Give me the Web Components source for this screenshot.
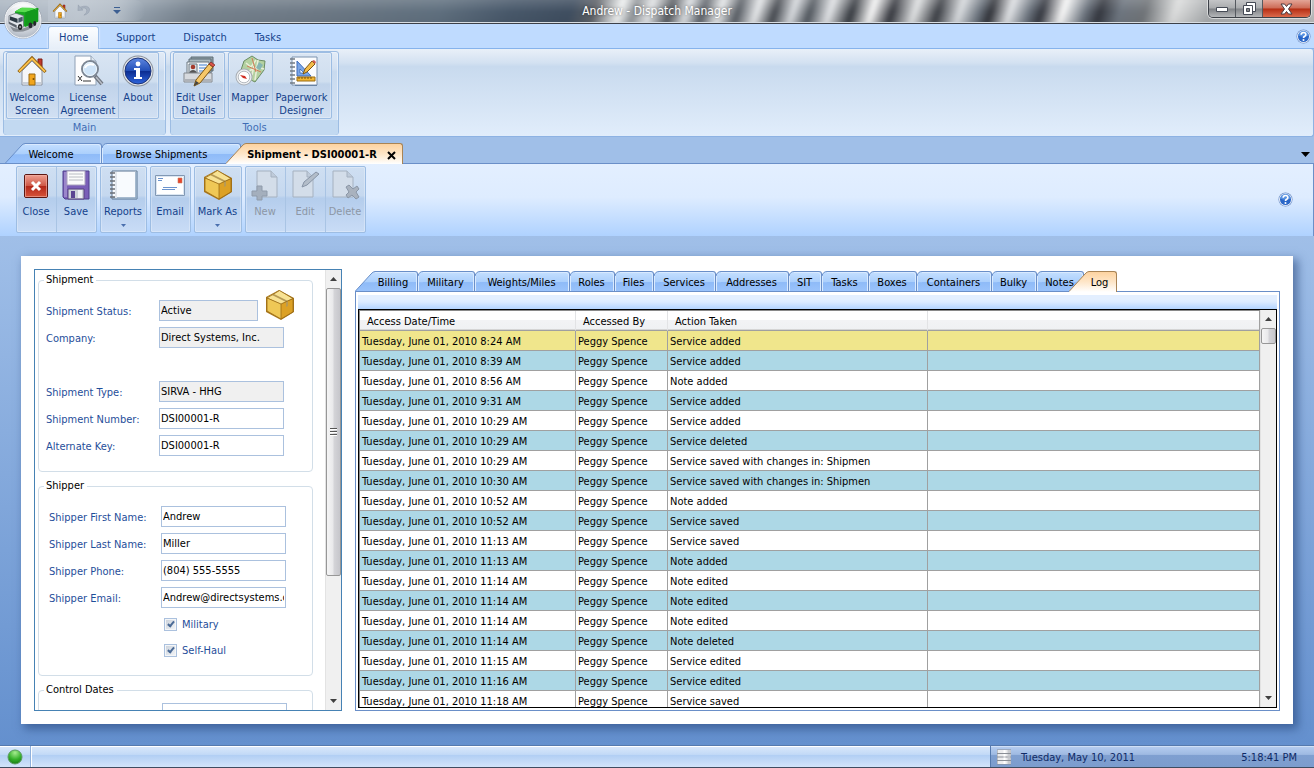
<!DOCTYPE html>
<html lang="en">
<head>
<meta charset="utf-8">
<title>Andrew - Dispatch Manager</title>
<style>
html, body { margin: 0; height: 100%; }
body { font: 11px/14px "DejaVu Sans Condensed", "DejaVu Sans", sans-serif; color: #000; overflow: hidden; background: #a0bfe8; }
</style>
</head>
<body>
<dispatch-app></dispatch-app>
<script>
const RESET = `<style>
:host { display: block; box-sizing: border-box; }
*, *::before, *::after { box-sizing: border-box; }
button { font: inherit; color: inherit; background: none; border: 0; padding: 0; margin: 0; cursor: default; }
svg { display: block; flex: none; }
</style>`;

function define(name, markup, setup) {
  const template = document.createElement('template');
  template.innerHTML = RESET + (typeof markup === 'string' ? markup : '');
  customElements.define(name, class extends HTMLElement {
    connectedCallback() {
      if (this.shadowRoot) return;
      const root = this.attachShadow({ mode: 'open' });
      if (typeof markup === 'function') root.innerHTML = RESET + markup(this);
      else root.append(template.content.cloneNode(true));
      if (setup) setup(this, root);
    }
  });
}

/* ---------- icons ---------- */
const PAGE = `<path d="M8 2h14l6 6v20H8z" fill="#d3dde9" stroke="#a5b1c0"/><path d="M22 2v6h6" fill="#bfcbda" stroke="#a5b1c0"/>`;
const PAGE_LEFT = `<path d="M4 2h14l6 6v20H4z" fill="#d3dde9" stroke="#a5b1c0"/><path d="M18 2v6h6" fill="#bfcbda" stroke="#a5b1c0"/>`;
const ICONS = {
  house: `<path d="M22 4h4v9h-4z" fill="#c0392b" stroke="#7d2016"/><path d="M6 16 16 6l10 10v14H6z" fill="#f6f7f9" stroke="#8d94a0"/><path d="M7 27h18v3H7z" fill="#c9cfd8"/><path d="M13 19h6v11h-6z" fill="#f2a51c" stroke="#9b6a10"/><circle cx="17.500" cy="24" r="1" fill="#7a4c00"/><path d="M2.500 17 16 3l13.500 14" fill="none" stroke="#8a5b0d" stroke-width="3.200"/><path d="M3 16.500 16 3.500l13 13" fill="none" stroke="#f9c04a" stroke-width="1.800"/>`,
  license: `<path d="M3 1h16l5 5v24H3z" fill="#fdfdfe" stroke="#8fa0b5"/><path d="M19 1v5h5" fill="#dfe6ee" stroke="#8fa0b5"/><path d="m6 21 4 5m0-5-4 5M11 26h8" stroke="#333" fill="none"/><path d="m23 21 7 8" stroke="#6f7681" stroke-width="4"/><path d="m24 22 6 7" stroke="#b8bdc6" stroke-width="1.500"/><circle cx="18" cy="14" r="8" fill="#cfe4f8" stroke="#7d8794" stroke-width="2"/><circle cx="18" cy="14" r="6.500" fill="none" stroke="#eef6fd"/><path d="M13 13a6 5 0 0 1 9-3" stroke="#fff" stroke-width="2" fill="none"/>`,
  about: `<defs><linearGradient id="ab" x2="0" y2="1"><stop offset="0" stop-color="#5d86e0"/><stop offset=".48" stop-color="#2450b8"/><stop offset=".52" stop-color="#0c2d92"/><stop offset="1" stop-color="#2f65dc"/></linearGradient></defs><circle cx="16" cy="16" r="15.500" fill="#888f99"/><circle cx="16" cy="16" r="14.600" fill="#e3e6ea"/><circle cx="16" cy="16" r="13" fill="url(#ab)" stroke="#1b3277"/><circle cx="16" cy="9" r="2.400" fill="#fff"/><path d="M12 13h6v9h2v2h-8v-2h2v-7h-2z" fill="#fff"/>`,
  userEdit: `<path d="M8 2h22v14H8z" fill="#8fa0a8" stroke="#5f6c74"/><path d="M6 4h22v14H6z" fill="#a9b9c0" stroke="#5f6c74"/><path d="M4 7h22v14H4z" fill="#f4f8fb" stroke="#6a767e"/><path d="M6 9h8v9H6z" fill="#dce4ea" stroke="#6a767e"/><circle cx="10" cy="12" r="2.300" fill="#a33a2c"/><path d="M6.500 18c0-4 7-4 7 0z" fill="#555"/><path d="M16 10h8m-8 3h8m-8 3h6" stroke="#3f7fd0"/><path d="M1 18h28v9H1z" fill="#d7dade" stroke="#84898f"/><path d="M1.500 24h27v2.500h-27z" fill="#aeb2b8"/><path d="m11 31 2-6L26 9l4 3-13 16z" fill="#f6c768" stroke="#7c5513"/><path d="m26 9 2-2 4 3-2 2z" fill="#d9534a" stroke="#7d2b20" stroke-width=".7"/><path d="m11 31 2-5 3 2z" fill="#444"/>`,
  mapper: `<path d="M10 6 18 1l6 4 7 1-1 9-9 12-8-4-9 1z" fill="#b4d1a0" stroke="#6b8c63"/><path d="m12 8 5 4 5-7M15 16l8-4 7 2M18 20l2-9M24 5l-3 20" stroke="#e8efd8" stroke-width="1.600" fill="none"/><path d="m18 3 4 14m-9-6 14 6" stroke="#d17a55" fill="none"/><path d="m25 7 4 3-3 5-4-2z" fill="#86b5b2"/><circle cx="10" cy="22" r="8.500" fill="#a8aeb5"/><circle cx="10" cy="22" r="7.500" fill="#eef0f2"/><circle cx="10" cy="22" r="5.800" fill="#fff" stroke="#b5bac0"/><path d="m6 20 5 1 2 3-4-1z" fill="#cf2c20"/>`,
  designer: `<path d="M6 2h25v28H6z" fill="#fbfcfe" stroke="#7d93ae"/><path d="M9 30.500h22" stroke="#6883a5"/><path d="M4 4h5M4 8h5M4 12h5M4 16h5M4 20h5M4 24h5M4 28h5" stroke="#737b84" stroke-width="1.600"/><path d="m11 6 14 15H11z" fill="#7ba6e6" stroke="#3d6dbd"/><path d="m14 14 4 4h-4z" fill="#fbfcfe" stroke="#2c5eb0" stroke-width=".7"/><path d="M11 22h18v4H11z" fill="#f2b632" stroke="#9a6c12"/><path d="M13 22v2m3-2v2m3-2v2m3-2v2m3-2v2" stroke="#7a520a"/><path d="m17 19 2-5 7-8 3 3-8 8z" fill="#f3bc4a" stroke="#7c5513"/><path d="m26 6 2-1 2 2-1 2z" fill="#d05a50"/>`,
  close: `<defs><linearGradient id="cl" x2="0" y2="1"><stop offset="0" stop-color="#f0a294"/><stop offset=".48" stop-color="#cf5a48"/><stop offset=".52" stop-color="#b3281a"/><stop offset="1" stop-color="#d8563c"/></linearGradient></defs><rect x="4.500" y="5.500" width="23" height="23" rx="1.500" fill="url(#cl)" stroke="#5c1712"/><rect x="5.500" y="6.500" width="21" height="21" fill="none" stroke="#f2b3a6" stroke-opacity=".6"/><path d="m12 13 8 8m0-8-8 8" stroke="#fff" stroke-width="3"/>`,
  save: `<path d="M3 2h26v28H5l-2-2z" fill="#7a5fb8" stroke="#4e3f8c"/><path d="M4 3h3v25H4z" fill="#9b86cb"/><path d="M7 2h18v14H7z" fill="#fbfbfb" stroke="#a9a2bd"/><path d="M9 5h14M9 8h14M9 11h14" stroke="#b9bcc3"/><path d="M8 20h16v10H8z" fill="#ccd1d8" stroke="#56427e"/><path d="M11 22h4v7h-4z" fill="#5b4592"/><path d="M18 21h4v8h-4z" fill="#eef0f3"/>`,
  reports: `<path d="M5 2h25v28H5z" fill="#f8fbfe" stroke="#5b7591"/><path d="M29 3v26H6" stroke="#8aa5c0" fill="none" stroke-width="1.500"/><path d="M9 3v26" stroke="#e1e6ec" stroke-width="2"/><path d="M3 4h5M3 8h5M3 12h5M3 16h5M3 20h5M3 24h5M3 28h5" stroke="#696f76" stroke-width="1.600"/>`,
  email: `<path d="M1.500 6.500h29v20h-29z" fill="#fff" stroke="#8198b4"/><path d="M2.500 7.500h27v18h-27z" fill="none" stroke="#dbe6f2"/><path d="M24 9h4v5h-4z" fill="#e8452c" stroke="#c47a60" stroke-width=".6"/><path d="M4 9.500h5M4 11.500h4M9 18.500h14M8 20.500h13" stroke="#6b93cd"/>`,
  box: `<path d="m15 1 15 8v14L17 31 2 23V8z" fill="#a9761a"/><path d="m3 9 14 6v15L3 22z" fill="#efc856"/><path d="m17 15 12-5v12.500L17 30z" fill="#dca125"/><path d="m3 8.500 12.500-7 13 8L17 15z" fill="#f8e293"/><path d="m8 6 14 7v5l2-1v-5L10 5z" fill="#b79a55"/><path d="M17 15v15M3 9l14 6 12-5.500M3 9v13l14 8 12-7V9.500L15.500 1.500z" fill="none" stroke="#9a6c17" stroke-width=".8"/>`,
  newDoc: PAGE + `<path d="M8 17h5v5h5v5h-5v4H8v-4H3v-5h5z" fill="#a4afbd" stroke="#8f9bab"/>`,
  editDoc: PAGE_LEFT + `<path d="m13 18 2-5L27 3l3 2-12 11z" fill="#b3bdc9" stroke="#8794a6"/>`,
  deleteDoc: PAGE_LEFT + `<path d="m17 18 3-2 4 4 4-3 2 3-3 3 3 5-3 2-4-4-4 3-2-3 3-3z" fill="#a9b2be" stroke="#8a96a6"/>`,
  help: `<circle cx="16" cy="16" r="15" fill="#6d8fc9"/><circle cx="16" cy="16" r="13.500" fill="#fff"/><circle cx="16" cy="16" r="11.800" fill="#2b67c8"/><path d="M5 14a11 11 0 0 1 22 0q-11 5-22 0" fill="#6aa2ea" opacity=".7"/><path d="M11 12.500q0-5 5-5t5 4.500q0 2-2.500 3.500T16 19" fill="none" stroke="#fff" stroke-width="3.500"/><circle cx="16" cy="23.500" r="2.200" fill="#fff"/>`,
  undo: `<path d="m5 4-1 12 11-1-4-3q10-4 12 3 1 6-6 11 12-3 12-13Q26 3 8 9z" fill="#a9b3c0" stroke="#8d98a7"/>`,
  truck: `<defs><radialGradient id="orb" cx=".5" cy=".25" r=".8"><stop offset="0" stop-color="#fff"/><stop offset=".6" stop-color="#d9dde3"/><stop offset="1" stop-color="#a7b0bd"/></radialGradient></defs><circle cx="20" cy="20" r="19" fill="#7e8794" opacity=".6"/><circle cx="20" cy="20" r="18" fill="url(#orb)" stroke="#f4f6f8"/><g transform="translate(2.500 2) scale(.86)"><path d="M5 28q14 9 28-5l2 4q-12 10-26 7z" fill="#6b7078" opacity=".7"/><path d="m11 11 7-4 20 0v16l-15 6-12-8z" fill="#17a81f"/><path d="m11 11 8-4.500 19 .5-15 5z" fill="#58dc50"/><path d="m23 12 15-5v15l-15 6z" fill="#12991b"/><path d="m4 16 8-3 9 3v13l-8 1-9-5z" fill="#e1e5ea" stroke="#606873" stroke-width=".8"/><path d="m5 16.500 9 3v5l-9-3.500z" fill="#2c3944"/><path d="m15 19 5-2v5l-5 2z" fill="#4a5a68"/><path d="m4 23 9 4v3l-9-5z" fill="#596069"/><ellipse cx="17" cy="29" rx="2.500" ry="3.500" fill="#25282c"/><ellipse cx="29" cy="27" rx="2.200" ry="3.300" fill="#25282c"/><ellipse cx="34" cy="25" rx="1.800" ry="2.800" fill="#25282c"/><circle cx="17" cy="29" r="1" fill="#bbb"/></g><path d="M6 10Q20-4 34 10q-8-4-14-4T6 10" fill="#fff" opacity=".5"/>`,
  db: `<path d="M2 1h28v30H2z" fill="#8b8f96"/><path d="M3 2h26v6H3zM3 10h26v5H3zM3 17h26v5H3zM3 24h26v6H3z" fill="#ececee"/><path d="M15 2h4v6h-4zM15 10h4v5h-4zM15 17h4v5h-4zM15 24h4v6h-4z" fill="#fff"/><path d="M23 2h6v6h-6zM23 10h6v5h-6zM23 17h6v5h-6zM23 24h6v6h-6z" fill="#c9cbd0"/>`
};
define('ui-icon', el => {
  const size = el.getAttribute('size') || 32;
  const box = el.getAttribute('name') === 'truck' ? 40 : 32;
  return `<style>:host { flex: none; width: ${size}px; height: ${size}px; }</style>
  <svg width="${size}" height="${size}" viewBox="0 0 ${box} ${box}" aria-hidden="true">${ICONS[el.getAttribute('name')]}</svg>`;
});

/* ---------- title bar ---------- */
define('title-bar', `<style>
:host { position: relative; height: 24px; overflow: hidden; background: #6c7882; border-bottom: 1px solid #3c4048; display: flex; justify-content: center; }
.glass { position: absolute; inset: -4px -10px; transform: skewX(-18deg); filter: blur(2px); background:
  linear-gradient(#fff3, #fff0 50%, #0001),
  linear-gradient(90deg, #aab5c1 0, #b8c1cb 90px, #9aa6b2 140px, #77838f 200px, #6d7985 330px, #5f6f7e 450px, #48586a 520px, #3f4e60 580px, #5d6167 604px, #f2f4f4 630px, #8e9296 644px, #e4e6e8 660px, #55595e 680px, #dfe2e5 697px, #5c6168 713px, #e9ebec 730px, #565b62 748px, #e8eaec 767px, #43474d 785px, #dadde1 803px, #4f555c 820px, #e4e6e9 840px, #34383e 862px, #fafafa 882px, #34363d 902px, #e2e4e5 925px, #3a3d43 948px, #dadde0 970px, #68707a 990px, #303238 1001px, #e2e4e7 1020px, #69717b 1040px, #34373f 1052px, #fafafa 1073px, #6a727c 1096px, #34373f 1110px, #6e7680 1130px, #707478 1155px, #dcdddd 1185px, #a8abad 1220px, #b9bbbc 1300px); }
.rim { position: absolute; inset: auto 0 0; height: 1px; background: #d8dde2; }
.tools { position: absolute; left: 48px; top: 0; height: 21px; display: flex; align-items: center; gap: 8px; padding: 0 24px 0 4px; border-radius: 0 10px 10px 0; background: linear-gradient(90deg, #c3ccd680, #c9d0d880 70%, #c9d0d800); }
.caret { width: 8px; margin-left: 14px; }
h1 { position: relative; margin: 0; font-weight: normal; font-size: 12px; line-height: 22px; color: #fff; text-shadow: 0 0 3px #0008; }
.win { position: absolute; right: 3px; top: 0; height: 18px; display: flex; border: 1px solid #3d4148; border-top: 0; border-radius: 0 0 5px 5px; overflow: hidden; box-shadow: 0 0 0 1px #fff8; }
.win button { width: 27px; display: grid; place-items: center; background: linear-gradient(#c4c5c7, #a9abad 48%, #7f8286 52%, #b5b7b9); border-right: 1px solid #55595f; }
.win .x { width: 47px; border: 0; background: linear-gradient(#e3a597, #cd6a55 48%, #b52d13 52%, #dc6a4c); }
</style>
<div class="glass"></div><div class="rim"></div>
<div class="tools">
  <button aria-label="Home"><ui-icon name="house" size="16"></ui-icon></button>
  <button aria-label="Undo"><ui-icon name="undo" size="15"></ui-icon></button>
  <button class="caret" aria-label="Customize"><svg width="8" height="8" viewBox="0 0 8 8"><path d="M1 .5h6" stroke="#3d5f92"/><path d="M0 3h8L4 7z" fill="#3d5f92"/></svg></button>
</div>
<h1>Andrew - Dispatch Manager</h1>
<div class="win">
  <button aria-label="Minimize"><svg width="12" height="6" viewBox="0 0 12 6"><path d="M.5 1.500h11v4H.5z" fill="#fff" stroke="#454a55"/></svg></button>
  <button aria-label="Restore"><svg width="13" height="13" viewBox="0 0 13 13"><path d="M3.500.5h9v9h-9z" fill="#fff" stroke="#454a55"/><path d="M.5 3.500h9v9h-9z" fill="#fff" stroke="#454a55"/><path d="M3.500 6.500h3v3h-3z" fill="#888" stroke="#454a55"/></svg></button>
  <button class="x" aria-label="Close window"><svg width="13" height="12" viewBox="0 0 13 12"><path d="M1 1h3.500l2 2.500L8.500 1H12L8.500 6l3.500 5H8.500l-2-2.500-2 2.500H1l3.500-5z" fill="#fff" stroke="#4a3a40"/></svg></button>
</div>`);

/* ---------- ribbon ---------- */
define('ribbon-tabs', `<style>
:host { height: 25px; background: #bfdbff; border-bottom: 1px solid #86b3ec; display: flex; align-items: flex-end; padding: 0 3px 0 48px; }
nav { display: flex; flex: 1; gap: 6px; margin-bottom: -1px; }
button { height: 23px; padding: 0 10px 1px; border: 1px solid transparent; border-bottom: 0; border-radius: 3px 3px 0 0; color: #15428b; }
button.on { border-color: #9fc0ea; background: linear-gradient(#fbfdff, #e6eef8); box-shadow: 0 0 2px #fff; }
.help { height: 16px; padding: 0; margin-bottom: 4px; border: 0; }
</style>
<nav><button class="on">Home</button><button>Support</button><button>Dispatch</button><button>Tasks</button></nav>
<button class="help" aria-label="Help"><ui-icon name="help" size="15"></ui-icon></button>`);

define('ribbon-group', el => `<style>
:host { display: flex; flex-direction: column; border: 1px solid #9dbde3; border-radius: 3px; background: linear-gradient(#e3ecf7, #d3e1f2 20%, #c8daef 24%, #d9e7f7); box-shadow: inset 0 0 0 1px #f2f7fd99; }
.items { display: flex; gap: 3px; padding: 0 6px 0 2px; }
.title { height: 15px; margin-top: 1px; text-align: center; line-height: 16px; color: #3e6db5; background: #c2d9f1; border-radius: 0 0 3px 3px; }
</style><div class="items"><slot></slot></div><div class="title">${el.getAttribute('title-text')}</div>`);

define('button-box', `<style>
:host { display: flex; height: 67px; border: 1px solid #9dbde3; border-radius: 2px; background: linear-gradient(#d9e5f3, #cfdeef 44%, #c0d3ea 48%, #d1e0f3); box-shadow: inset 0 0 0 1px #ffffff44; }
::slotted(tool-button:not(:first-child)) { border-left: 1px solid #a9c4e4; }
</style><slot></slot>`);

define('tool-button', el => `<style>
:host { width: var(--w); }
button { display: flex; flex-direction: column; align-items: center; gap: 4px; width: 100%; height: 100%; padding: 2px 1px 0 0; color: #15428b; line-height: 13px; text-align: center; white-space: nowrap; }
button:disabled { color: #8d97a5; }
.menu { margin-top: 2px; }
</style><button ${el.hasAttribute('disabled') ? 'disabled' : ''}><ui-icon name="${el.getAttribute('icon')}"></ui-icon><span><slot></slot></span>
${el.hasAttribute('menu') ? '<svg class="menu" width="5" height="3" viewBox="0 0 5 3"><path d="M0 0h5L2.500 3z" fill="#4a6fae"/></svg>' : ''}</button>`);

define('ribbon-bar', `<style>
:host { height: 88px; display: flex; gap: 4px; padding: 2px 3px 1px; background: linear-gradient(#e9f0f8, #d3e1f1 16%, #c8daee 20%, #e1edfb); border-bottom: 1px solid #8db2e3; border-right: 1px solid #8db2e3; border-radius: 0 3px 3px 0; }
</style>
<ribbon-group title-text="Main">
  <button-box>
    <tool-button icon="house" style="--w:51px">Welcome<br>Screen</tool-button>
    <tool-button icon="license" style="--w:60px">License<br>Agreement</tool-button>
    <tool-button icon="about" style="--w:40px">About</tool-button>
  </button-box>
</ribbon-group>
<ribbon-group title-text="Tools">
  <button-box><tool-button icon="userEdit" style="--w:50px">Edit User<br>Details</tool-button></button-box>
  <button-box>
    <tool-button icon="mapper" style="--w:43px">Mapper</tool-button>
    <tool-button icon="designer" style="--w:59px">Paperwork<br>Designer</tool-button>
  </button-box>
</ribbon-group>`);

/* ---------- tabs ---------- */
define('tab-strip', `<style>
:host { display: flex; height: 21px; padding-left: var(--inset, 0px); box-shadow: inset 0 -1px #6a8fc8; }
</style><slot></slot>`);

define('tab-item', el => {
  const on = el.hasAttribute('active'), slant = el.hasAttribute('slant');
  const w = slant ? 20 : 5, line = on ? '#a98455' : '#6a8fc8';
  const stops = on ? '<stop stop-color="#fdd3a0"/><stop offset=".5" stop-color="#fee6c8"/><stop offset="1" stop-color="#fff"/>'
    : '<stop stop-color="#c4dfff"/><stop offset=".5" stop-color="#acd0fc"/><stop offset=".55" stop-color="#8fbbf8"/><stop offset="1" stop-color="#9ac3fb"/>';
  const edge = slant ? 'M0 20.500 16 3Q18 .5 20 .5' : 'M0 5Q1 .5 5 .5';
  return `<style>
  :host { width: var(--w); flex: none; ${on ? 'margin-left:-15px; position: relative;' : ''} }
  .tab { display: flex; width: 100%; height: 21px; }
  .body { flex: 1; display: flex; align-items: center; justify-content: center; padding: 2px var(--pad, 6px) 0 0; white-space: nowrap; border: 1px solid ${line}; border-left: 0; border-top-right-radius: 3px; ${on ? 'border-bottom: 0;' : ''}
    background: ${on ? 'linear-gradient(#fdd3a0, #fee6c8 50%, #fff)' : 'linear-gradient(#c4dfff, #acd0fc 50%, #8fbbf8 55%, #9ac3fb)'}; ${on ? '' : 'box-shadow: inset -1px 1px #d9eaff;'} }
  </style><button class="tab" role="tab" aria-selected="${on}"><svg width="${w}" height="21" viewBox="0 0 ${w} 21"><defs><linearGradient id="g" x2="0" y2="1">${stops}</linearGradient></defs>
  <path d="${edge}V21H0z" fill="url(#g)"/><path d="${edge}" fill="none" stroke="${line}"/>${slant ? '' : '<path d="M.5 20V5" stroke="#d9eaff"/>'}${on ? '' : `<path d="M0 20.500h${w}" stroke="${line}"/>`}</svg><span class="body"><slot></slot></span></button>`;
});

define('document-tabs', `<style>
:host { display: flex; padding-top: 6px; background: #a0bfe8; }
tab-strip { flex: 1; --inset: 5px; }
tab-item { --pad: 24px; }
tab-item[active] { --pad: 5px; font-weight: bold; }
.x { margin-left: 10px; }
.more { align-self: flex-end; padding: 0 4px 7px 0; box-shadow: inset 0 -1px #6a8fc8; }
</style>
<tab-strip role="tablist">
  <tab-item slant style="--w:97px">Welcome</tab-item>
  <tab-item style="--w:139px">Browse Shipments</tab-item>
  <tab-item slant active style="--w:177px">Shipment - DSI00001-R<svg class="x" width="9" height="9" viewBox="0 0 9 9"><path d="m1 1 7 7m0-7-7 7" stroke="#000" stroke-width="2"/></svg></tab-item>
</tab-strip>
<button class="more" aria-label="More tabs"><svg width="9" height="5" viewBox="0 0 9 5"><path d="M0 0h9L4.500 5z"/></svg></button>`);

/* ---------- document toolbar ---------- */
define('document-toolbar', `<style>
:host { display: flex; gap: 3px; padding: 2px 20px 3px 16px; background: linear-gradient(#e3efff, #deecff 46%, #afd2ff); border-right: 1px solid #6a8fc8; }
button-box { background: linear-gradient(#cfdff2, #c5d8ef 44%, #b4cdec 48%, #c9dcf6); }
.help { margin-left: auto; }
</style>
<button-box><tool-button icon="close" style="--w:39px">Close</tool-button><tool-button icon="save" style="--w:40px">Save</tool-button></button-box>
<button-box><tool-button icon="reports" menu style="--w:45px">Reports</tool-button></button-box>
<button-box><tool-button icon="email" style="--w:39px">Email</tool-button></button-box>
<button-box><tool-button icon="box" menu style="--w:46px">Mark As</tool-button></button-box>
<button-box><tool-button icon="newDoc" disabled style="--w:39px">New</tool-button><tool-button icon="editDoc" disabled style="--w:40px">Edit</tool-button><tool-button icon="deleteDoc" disabled style="--w:40px">Delete</tool-button></button-box>
<button class="help" aria-label="Help"><ui-icon name="help" size="15"></ui-icon></button>`);

/* ---------- scroll bar ---------- */
define('scroll-bar', `<style>
:host { flex: none; display: flex; flex-direction: column; align-items: center; width: 16px; background: #f0f0f0; border-left: 1px solid #e3e3e3; }
.end { flex: none; height: 18px; display: grid; place-items: center; }
.track { flex: 1; width: 100%; min-height: 0; }
.thumb { display: grid; place-items: center; height: var(--thumb); border: 1px solid #979797; border-radius: 2px; background: linear-gradient(90deg, #f5f5f5, #e9e9eb 45%, #d4d4d8 55%, #c6c6cb); }
</style>
<div class="end"><svg width="7" height="4" viewBox="0 0 7 4"><path d="M0 4h7L3.500 0z" fill="#404040"/></svg></div>
<div class="track"><div class="thumb"><slot></slot></div></div>
<div class="end"><svg width="7" height="4" viewBox="0 0 7 4"><path d="M0 0h7L3.500 4z" fill="#404040"/></svg></div>`);

/* ---------- shipment form ---------- */
define('field-group', el => `<style>
fieldset { margin: 0; min-width: 0; padding: var(--top, 13px) 8px 15px var(--left, 7px); border: 1px solid #d2dee8; border-radius: 4px; display: block; }
legend { padding: 0 3px 0 2px; margin-left: calc(5px - var(--left, 7px)); line-height: 14px; }
.rows { display: grid; gap: 6px; }
</style><fieldset><legend>${el.getAttribute('label')}</legend><div class="rows"><slot></slot></div></fieldset>`);

define('text-field', el => `<style>
:host { display: flex; height: 21px; align-items: center; }
label { width: var(--label, 113px); flex: none; color: #1f4e9a; padding-top: 2px; }
input { width: var(--field, 125px); height: 21px; padding: 0 1px; border: 1px solid #abc1de; border-radius: 0; background: #fff; font: inherit; color: #000; outline: 0; }
input:read-only { background: #f0f0f0; }
</style><label for="f">${el.getAttribute('label')}</label><input id="f" type="text" value="${el.getAttribute('value') || ''}" ${el.hasAttribute('readonly') ? 'readonly' : ''}><slot></slot>`);

define('check-field', el => `<style>
:host { display: flex; height: 20px; align-items: center; padding-left: 115px; }
input { appearance: none; width: 13px; height: 13px; margin: 0 5px 0 0; border: 1px solid #abc1de; background: linear-gradient(135deg, #c9d0da, #f4f6f8); box-shadow: inset 0 0 0 1px #f4f6f8; display: grid; place-items: center; }
input:checked::before { content: ""; width: 4px; height: 7px; margin-top: -2px; border: solid #4a6a96; border-width: 0 2px 2px 0; transform: rotate(40deg); }
label { color: #1f4e9a; padding-top: 2px; }
</style><input id="c" type="checkbox" checked><label for="c">${el.getAttribute('label')}</label>`);

define('shipment-form', `<style>
:host { display: flex; border: 1px solid #4682b4; background: #fff; overflow: hidden; }
.scroll { flex: 1; overflow: hidden; padding: 3px 12px 0 3px; display: flex; flex-direction: column; gap: 7px; }
field-group { flex: none; }
.wide { --left: 10px; --label: 112px; }
.dates { --left: 10px; --label: 113px; --top: 6px; }
.spacer { height: 21px; }
ui-icon { margin: -17px 0 -5px 6px; }
scroll-bar { --thumb: 288px; }
.grip { width: 7px; height: 8px; background: repeating-linear-gradient(#555 0 1px, #fff 1px 2px, #ddd0 2px 3px); }
</style>
<div class="scroll">
  <field-group label="Shipment">
    <text-field label="Shipment Status:" value="Active" readonly style="--field:99px"><ui-icon name="box"></ui-icon></text-field>
    <text-field label="Company:" value="Direct Systems, Inc." readonly></text-field>
    <div class="spacer"></div>
    <text-field label="Shipment Type:" value="SIRVA - HHG" readonly></text-field>
    <text-field label="Shipment Number:" value="DSI00001-R"></text-field>
    <text-field label="Alternate Key:" value="DSI00001-R"></text-field>
  </field-group>
  <field-group label="Shipper" class="wide">
    <text-field label="Shipper First Name:" value="Andrew"></text-field>
    <text-field label="Shipper Last Name:" value="Miller"></text-field>
    <text-field label="Shipper Phone:" value="(804) 555-5555"></text-field>
    <text-field label="Shipper Email:" value="Andrew@directsystems.com"></text-field>
    <check-field label="Military"></check-field>
    <check-field label="Self-Haul"></check-field>
  </field-group>
  <field-group label="Control Dates" class="dates">
    <text-field label="" value=""></text-field>
  </field-group>
</div>
<scroll-bar><div class="grip"></div></scroll-bar>`);

/* ---------- log table ---------- */
const LOG = [
  ['8:24', 'Service added'], ['8:39', 'Service added'], ['8:56', 'Note added'], ['9:31', 'Service added'],
  ['10:29', 'Service added'], ['10:29', 'Service deleted'], ['10:29', 'Service saved with changes in: Shipmen'],
  ['10:30', 'Service saved with changes in: Shipmen'], ['10:52', 'Note added'], ['10:52', 'Service saved'],
  ['11:13', 'Service saved'], ['11:13', 'Note added'], ['11:14', 'Note edited'], ['11:14', 'Note edited'],
  ['11:14', 'Note edited'], ['11:14', 'Note deleted'], ['11:15', 'Service edited'], ['11:16', 'Service edited'],
  ['11:18', 'Service saved']
];
define('log-table', `<style>
:host { display: flex; min-height: 0; overflow: hidden; border: 1px solid #000; background: #fff; }
.view { flex: 1; min-width: 0; overflow: hidden; border: solid #8a8a8a; border-width: 1px 0 0 1px; }
table { width: 100%; table-layout: fixed; border-collapse: separate; border-spacing: 0; }
th, td { height: 20px; padding: 2px 2px 0; text-align: left; font-weight: normal; line-height: 17px; white-space: nowrap; overflow: hidden; border: solid #a0a0a0; border-width: 0 1px 1px 0; background-clip: padding-box; }
th { padding-left: 7px; border-right-color: #e2e3e5; background: linear-gradient(#fff 45%, #f2f3f5 50%, #eff1f3); box-shadow: inset 0 -1px #d5d5d5; }
td:last-child, th:last-child { border-right-color: #a0a0a0; }
tr:nth-child(even) td { background-color: #add8e6; }
tr.current td { background-color: #f0e68c; }
scroll-bar { --thumb: 16px; }
</style>
<div class="view"><table>
<colgroup><col style="width:216px"><col style="width:92px"><col style="width:260px"><col></colgroup>
<thead><tr><th>Access Date/Time</th><th>Accessed By</th><th>Action Taken</th><th></th></tr></thead>
<tbody></tbody></table></div><scroll-bar></scroll-bar>`, (el, root) => {
  root.querySelector('tbody').innerHTML = LOG.map(([t, a], i) =>
    `<tr${i ? '' : ' class="current"'}><td>Tuesday, June 01, 2010 ${t} AM</td><td>Peggy Spence</td><td>${a}</td><td></td></tr>`).join('');
});

define('shipment-details', `<style>
:host { display: flex; flex-direction: column; min-width: 0; padding-top: 2px; }
.panel { flex: 1; min-height: 0; display: flex; flex-direction: column; padding: 3px 2px 2px; border: 1px solid #6a8fc8; border-top: 0; }
.band { flex: none; height: 14px; background: linear-gradient(#e3efff 30%, #dcebff 50%, #b3d4ff); }
log-table { flex: 1; }
</style>
<tab-strip role="tablist">
  <tab-item slant style="--w:63px">Billing</tab-item>
  <tab-item style="--w:57px">Military</tab-item>
  <tab-item style="--w:95px">Weights/Miles</tab-item>
  <tab-item style="--w:45px">Roles</tab-item>
  <tab-item style="--w:39px">Files</tab-item>
  <tab-item style="--w:62px">Services</tab-item>
  <tab-item style="--w:73px">Addresses</tab-item>
  <tab-item style="--w:33px">SIT</tab-item>
  <tab-item style="--w:47px">Tasks</tab-item>
  <tab-item style="--w:48px">Boxes</tab-item>
  <tab-item style="--w:75px">Containers</tab-item>
  <tab-item style="--w:45px">Bulky</tab-item>
  <tab-item style="--w:47px">Notes</tab-item>
  <tab-item slant active style="--w:48px">Log</tab-item>
</tab-strip>
<div class="panel"><div class="band"></div><log-table></log-table></div>`);

/* ---------- status bar ---------- */
define('status-bar', `<style>
:host { display: flex; height: 23px; border-top: 1px solid #567aae; border-bottom: 1px solid #3f4c60; background: linear-gradient(#fff 0 1px, #d7e6fa 1px, #c3daf7 40%, #b2cff4 45%, #d3e4fa); color: #0f2a66; }
.state { width: 31px; display: grid; place-items: center; border-right: 1px solid #8fb0dc; box-shadow: 1px 0 #fff; }
.info { margin-left: auto; width: 324px; display: flex; align-items: center; gap: 9px; padding: 0 17px 0 5px; border-left: 1px solid #567aae; background: linear-gradient(#d0e0f6 0 1px, #b3cbef 1px, #9fbae2 40%, #7f9fd0 45%, #7c9dce); }
time { padding-top: 2px; }
time:last-child { margin-left: auto; }
</style>
<div class="state"><svg width="16" height="16" viewBox="0 0 16 16"><defs><radialGradient id="g" cx=".5" cy=".2" r=".8"><stop stop-color="#a5ec8f"/><stop offset=".6" stop-color="#35b02a"/><stop offset="1" stop-color="#1a7d16"/></radialGradient></defs><circle cx="8" cy="8" r="7" fill="url(#g)" stroke="#5c9a62"/></svg></div>
<div class="info"><ui-icon name="db" size="16"></ui-icon><time>Tuesday, May 10, 2011</time><time>5:18:41 PM</time></div>`);

/* ---------- application ---------- */
define('dispatch-app', `<style>
:host { display: flex; flex-direction: column; height: 100vh; position: relative; }
title-bar, ribbon-tabs, ribbon-bar, document-tabs, document-toolbar, status-bar { flex: none; }
.orb { position: absolute; left: 3px; top: 0; }
main { flex: 1; min-height: 0; display: flex; padding: 20px 21px 21px; background: linear-gradient(#a0bfe8, #6490ce); }
.sheet { flex: 1; min-width: 0; display: grid; grid-template: minmax(0, 1fr) / 308px minmax(0, 1fr); gap: 13px; padding: 13px; background: #fff; box-shadow: 4px 4px 9px 1px #1d3a6e88; }
</style>
<title-bar></title-bar>
<ribbon-tabs></ribbon-tabs>
<ribbon-bar></ribbon-bar>
<document-tabs></document-tabs>
<document-toolbar></document-toolbar>
<main><div class="sheet"><shipment-form></shipment-form><shipment-details></shipment-details></div></main>
<status-bar></status-bar>
<button class="orb" aria-label="Application menu"><ui-icon name="truck" size="40"></ui-icon></button>`);
</script>
</body>
</html>
